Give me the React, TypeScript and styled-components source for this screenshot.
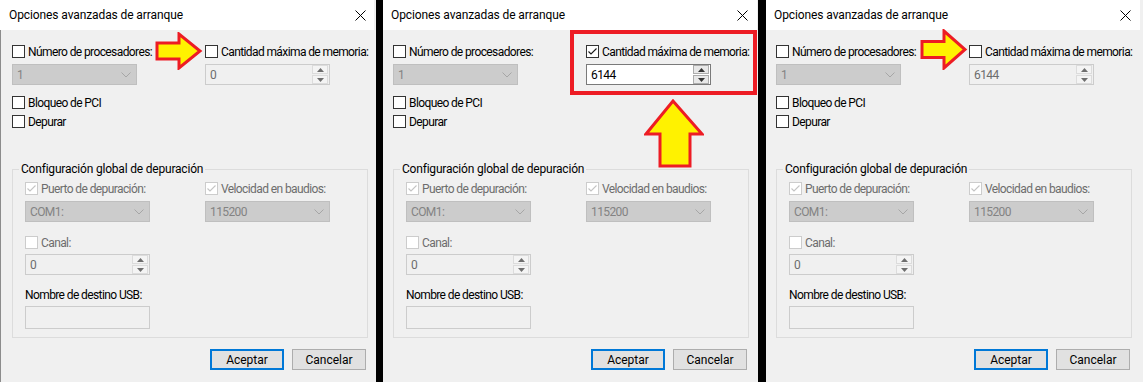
import React from "react";
import styled, { createGlobalStyle } from "styled-components";

const GlobalStyle = createGlobalStyle`
  html, body {
    margin: 0;
    padding: 0;
    background: #000;
  }
  body {
    width: 1143px;
    height: 382px;
    overflow: hidden;
    font-family: Roboto, "Liberation Sans", sans-serif;
    font-size: 12px;
    letter-spacing: -0.6px;
    color: #000;
  }
`;

const Strip = styled.div`
  display: flex;
  width: 1143px;
  height: 382px;
  background: #000;
`;

const Gutter = styled.div<{ $w: number }>`
  width: ${(p) => p.$w}px;
  flex: none;
`;

const Panel = styled.section<{ $w: number }>`
  position: relative;
  width: ${(p) => p.$w}px;
  flex: none;
  height: 382px;
  overflow: hidden;
  background: #f0f0f0;
  display: flex;
  flex-direction: column;
`;

const TitleBar = styled.header<{ $frame?: boolean }>`
  height: 30px;
  flex: none;
  background: #fff;
  display: flex;
  align-items: center;
  justify-content: space-between;
  padding: 0 ${(p) => (p.$frame ? 8 : 9)}px 0 ${(p) => (p.$frame ? 9 : 8)}px;
  box-sizing: border-box;
  width: 374px;
`;

const Title = styled.span`
  font-size: 12px;
  line-height: 16px;
  letter-spacing: -0.1px;
`;

const Body = styled.div<{ $frame?: boolean }>`
  flex: 1;
  padding: 15px 0 0 ${(p) => (p.$frame ? 12 : 10)}px;
  box-shadow: ${(p) => (p.$frame ? "inset 1px 0 0 #8c8c8c" : "none")};
  display: flex;
  flex-direction: column;
  align-items: flex-start;
`;

const Columns = styled.div<{ $left: number }>`
  display: grid;
  grid-template-columns: ${(p) => p.$left}px 125px;
`;

const Cell = styled.div<{ $gap: number }>`
  display: flex;
  flex-direction: column;
  gap: ${(p) => p.$gap}px;
`;

const CheckLine = styled.label<{ $top?: number }>`
  display: flex;
  align-items: center;
  gap: 3px;
  height: 13px;
  margin-top: ${(p) => p.$top ?? 0}px;
  white-space: nowrap;
`;

const Box = styled.span<{ $disabled?: boolean }>`
  width: 13px;
  height: 13px;
  box-sizing: border-box;
  flex: none;
  border: 1px solid ${(p) => (p.$disabled ? "#cccccc" : "#333333")};
  background: #fff;
  display: flex;
  align-items: center;
  justify-content: center;
`;

const Caption = styled.span<{ $disabled?: boolean }>`
  color: ${(p) => (p.$disabled ? "#6d6d6d" : "#000")};
  line-height: 14px;
`;

const Select = styled.div`
  width: 125px;
  height: 21px;
  box-sizing: border-box;
  border: 1px solid #bfbfbf;
  background: #cccccc;
  color: #838383;
  display: flex;
  align-items: center;
  justify-content: space-between;
  padding: 0 5px 0 4px;
`;

const Spin = styled.div<{ $disabled?: boolean }>`
  width: 125px;
  height: 21px;
  box-sizing: border-box;
  border: 1px solid ${(p) => (p.$disabled ? "#cccccc" : "#7a7a7a")};
  background: ${(p) => (p.$disabled ? "#f0f0f0" : "#fff")};
  color: ${(p) => (p.$disabled ? "#6d6d6d" : "#000")};
  display: flex;
  align-items: center;
  padding-left: 4px;
`;

const SpinValue = styled.span`
  flex: 1;
`;

const SpinButtons = styled.div`
  width: 16px;
  height: 19px;
  display: flex;
  flex-direction: column;
  gap: 1px;
  margin-right: 1px;
`;

const SpinButton = styled.span<{ $disabled?: boolean }>`
  flex: 1;
  box-sizing: border-box;
  border: 1px solid ${(p) => (p.$disabled ? "#dcdcdc" : "#acacac")};
  background: ${(p) => (p.$disabled ? "#f4f4f4" : "#e8e8e8")};
  display: flex;
  align-items: center;
  justify-content: center;
`;

const Group = styled.fieldset`
  width: 356px;
  box-sizing: border-box;
  margin: 33px 0 0;
  padding: 5px 0 8px 12px;
  border: 1px solid #dcdcdc;
  min-inline-size: 0;
`;

const Legend = styled.legend`
  margin-left: -6px;
  padding: 0 2px;
  line-height: 16px;
  font-size: 12px;
  letter-spacing: -0.2px;
`;

const GroupLabel = styled.div`
  margin-top: 13px;
  line-height: 14px;
`;

const TextBox = styled.div`
  width: 125px;
  height: 23px;
  box-sizing: border-box;
  margin-top: 4px;
  border: 1px solid #cccccc;
  background: #f0f0f0;
`;

const Buttons = styled.div`
  width: 356px;
  display: flex;
  justify-content: flex-end;
  gap: 8px;
  padding-right: 2px;
  box-sizing: border-box;
  margin-top: 11px;
`;

const Button = styled.button<{ $primary?: boolean }>`
  width: 74px;
  height: 21px;
  box-sizing: border-box;
  background: #e1e1e1;
  border: ${(p) => (p.$primary ? "2px solid #0078d7" : "1px solid #adadad")};
  font: inherit;
  color: #000;
  padding: 0;
`;

const Overlay = styled.div<{ $x: number; $y: number }>`
  position: absolute;
  left: ${(p) => p.$x}px;
  top: ${(p) => p.$y}px;
  line-height: 0;
`;

const Highlight = styled.div`
  position: absolute;
  left: 187px;
  top: 30px;
  width: 187px;
  height: 65px;
  box-sizing: border-box;
  border: 4px solid #ed1c24;
`;

const Tick = ({ color }: { color: string }) => (
  <svg width="11" height="11" viewBox="0 0 11 11">
    <polyline points="1.5,5.5 4,8 9.5,2.5" fill="none" stroke={color} strokeWidth="1.1" />
  </svg>
);

const Check = ({
  label,
  checked,
  disabled,
  top,
}: {
  label: string;
  checked?: boolean;
  disabled?: boolean;
  top?: number;
}) => (
  <CheckLine $top={top}>
    <Box $disabled={disabled}>{checked && <Tick color={disabled ? "#c4c4c4" : "#1a1a1a"} />}</Box>
    <Caption $disabled={disabled}>{label}</Caption>
  </CheckLine>
);

const Chevron = () => (
  <svg width="10" height="6" viewBox="0 0 10 6">
    <polyline points="0.5,0.5 5,5 9.5,0.5" fill="none" stroke="#a6a6a6" strokeWidth="1" />
  </svg>
);

const Combo = ({ value }: { value: string }) => (
  <Select>
    <span>{value}</span>
    <Chevron />
  </Select>
);

const Triangle = ({ up, color }: { up?: boolean; color: string }) => (
  <svg width="7" height="4" viewBox="0 0 7 4">
    <polygon points={up ? "0,4 7,4 3.5,0" : "0,0 7,0 3.5,4"} fill={color} />
  </svg>
);

const Spinner = ({ value, disabled }: { value: string; disabled?: boolean }) => (
  <Spin $disabled={disabled}>
    <SpinValue>{value}</SpinValue>
    <SpinButtons>
      <SpinButton $disabled={disabled}>
        <Triangle up color={disabled ? "#6e6e6e" : "#333"} />
      </SpinButton>
      <SpinButton $disabled={disabled}>
        <Triangle color={disabled ? "#6e6e6e" : "#333"} />
      </SpinButton>
    </SpinButtons>
  </Spin>
);

const CloseIcon = () => (
  <svg width="11" height="11" viewBox="0 0 11 11">
    <path d="M0.5 0.5 L10.5 10.5 M10.5 0.5 L0.5 10.5" stroke="#000" strokeWidth="1" />
  </svg>
);

const RightArrow = ({ h = 36 }: { h?: number }) => (
  <svg width="48" height={h + 2} viewBox={`0 0 48 ${h + 2}`}>
    <polygon
      points={`2,${h / 2 - 7} 24,${h / 2 - 7} 24,2 45,${h / 2 + 1} 24,${h} 24,${h / 2 + 9} 2,${h / 2 + 9}`}
      fill="#fff200"
      stroke="#ed1c24"
      strokeWidth="3"
      strokeLinejoin="miter"
    />
  </svg>
);

const UpArrow = () => (
  <svg width="60" height="70" viewBox="0 0 60 70">
    <polygon
      points="2,35 16,35 16,67 46,67 46,35 58,35 29,2"
      fill="#fff200"
      stroke="#ed1c24"
      strokeWidth="3"
    />
  </svg>
);

type DialogProps = {
  width: number;
  frame?: boolean;
  memChecked?: boolean;
  memValue: string;
  children?: React.ReactNode;
};

const Dialog = ({ width, frame, memChecked, memValue, children }: DialogProps) => (
  <Panel $w={width}>
    <TitleBar $frame={frame}>
      <Title>Opciones avanzadas de arranque</Title>
      <CloseIcon />
    </TitleBar>
    <Body $frame={frame}>
      <Columns $left={193}>
        <Cell $gap={6}>
          <Check label="Número de procesadores:" />
          <Combo value="1" />
        </Cell>
        <Cell $gap={6}>
          <Check label="Cantidad máxima de memoria:" checked={memChecked} />
          <Spinner value={memValue} disabled={!memChecked} />
        </Cell>
      </Columns>
      <Check label="Bloqueo de PCI" top={11} />
      <Check label="Depurar" top={6} />
      <Group>
        <Legend>Configuración global de depuración</Legend>
        <Columns $left={180}>
          <Cell $gap={6}>
            <Check label="Puerto de depuración:" checked disabled />
            <Combo value="COM1:" />
          </Cell>
          <Cell $gap={6}>
            <Check label="Velocidad en baudios:" checked disabled />
            <Combo value="115200" />
          </Cell>
        </Columns>
        <Cell $gap={5}>
          <Check label="Canal:" disabled top={14} />
          <Spinner value="0" disabled />
        </Cell>
        <GroupLabel>Nombre de destino USB:</GroupLabel>
        <TextBox />
      </Group>
      <Buttons>
        <Button $primary>Aceptar</Button>
        <Button>Cancelar</Button>
      </Buttons>
    </Body>
    {children}
  </Panel>
);

export default function App() {
  return (
    <>
      <GlobalStyle />
      <Strip>
        <Dialog width={376} frame memValue="0">
          <Overlay $x={155} $y={32}>
            <RightArrow h={36} />
          </Overlay>
        </Dialog>
        <Gutter $w={7} />
        <Dialog width={375} memChecked memValue="6144">
          <Highlight />
          <Overlay $x={261} $y={99}>
            <UpArrow />
          </Overlay>
        </Dialog>
        <Gutter $w={8} />
        <Dialog width={377} memValue="6144">
          <Overlay $x={154} $y={29}>
            <RightArrow h={39} />
          </Overlay>
        </Dialog>
      </Strip>
    </>
  );
}
